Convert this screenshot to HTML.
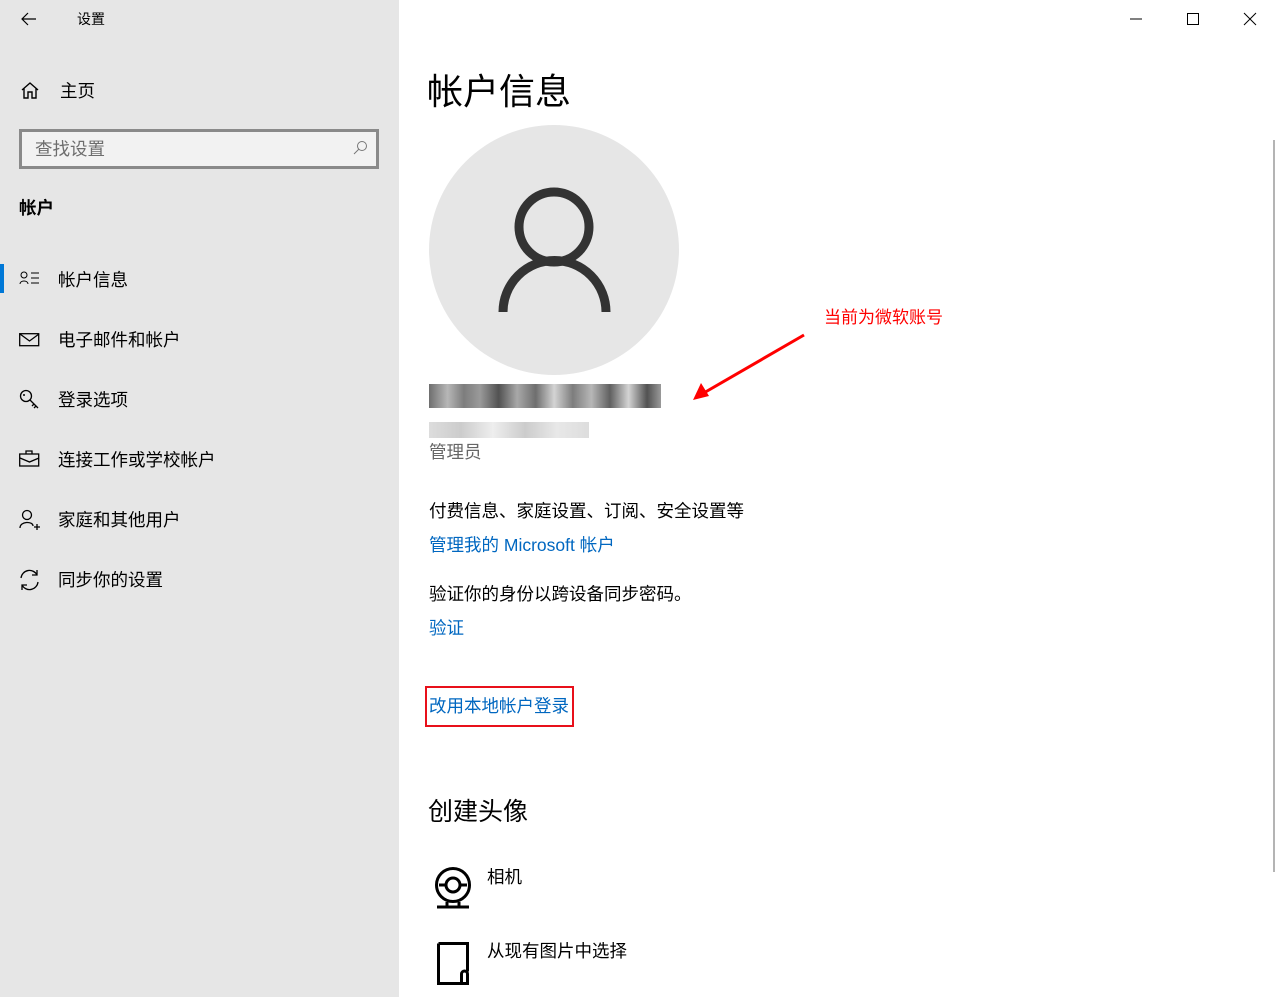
<!DOCTYPE html>
<html><head><meta charset="utf-8"><style>
body{margin:0;width:1277px;height:997px;position:relative;overflow:hidden;background:#fff;font-family:"Liberation Sans","Microsoft YaHei","Noto Sans CJK SC",sans-serif;color:#000}
.side{position:absolute;left:0;top:0;width:399px;height:997px;background:#e6e6e6}
.a{position:absolute;white-space:nowrap}
.nav{position:absolute;left:58px;font-size:17.5px}
.ic{position:absolute;left:19px}
.link{color:#0067c0}
</style></head><body>
<div class="side">
<svg class="a" style="left:20px;top:11px" width="18" height="16" viewBox="0 0 18 16"><path d="M16 8H2M8 2L2 8l6 6" stroke="#000" stroke-width="1.2" fill="none"/></svg>
<div class="a" style="left:77px;top:9px;font-size:14px">设置</div>
<svg class="a" style="left:20px;top:81px" width="20" height="19" viewBox="0 0 20 19"><path d="M2 9L10 2l8 7M4 7v10h4v-6h4v6h4V7" stroke="#000" stroke-width="1.4" fill="none"/></svg>
<div class="a" style="left:60px;top:78px;font-size:17.5px">主页</div>
<div class="a" style="left:19px;top:129px;width:354px;height:34px;border:3px solid #8a8a8a;background:#f2f2f2"></div>
<div class="a" style="left:35px;top:136px;font-size:17.5px;color:#6d6d6d">查找设置</div>
<svg class="a" style="left:352px;top:140px" width="16" height="16" viewBox="0 0 16 16"><circle cx="10" cy="6" r="4.5" stroke="#777" fill="none"/><path d="M7 9L2 14" stroke="#777"/></svg>
<div class="a" style="left:19px;top:195px;font-size:17.5px;font-weight:bold">帐户</div>
<div class="a" style="left:0;top:264px;width:4px;height:29px;background:#0078d7"></div>
<svg class="ic a" style="top:270px" width="22" height="16" viewBox="0 0 22 16"><circle cx="5" cy="5" r="3" stroke="#000" fill="none"/><path d="M1 14c0-4 8-4 8 0M12 3h8M12 8h8M12 13h8" stroke="#000" fill="none"/></svg>
<div class="nav" style="top:267px">帐户信息</div>
<svg class="ic a" style="top:333px" width="21" height="14" viewBox="0 0 21 14"><rect x=".7" y=".7" width="19" height="12" stroke="#000" stroke-width="1.3" fill="none"/><path d="M1 1l9.5 7L20 1" stroke="#000" stroke-width="1.3" fill="none"/></svg>
<div class="nav" style="top:327px">电子邮件和帐户</div>
<svg class="ic a" style="top:389px" width="21" height="22" viewBox="0 0 21 22"><circle cx="7" cy="7" r="5.5" stroke="#000" stroke-width="1.3" fill="none"/><circle cx="5" cy="6" r="1" fill="#000"/><path d="M11 11l8 8M15 15l-2 2M17 17l-2 2" stroke="#000" stroke-width="1.3"/></svg>
<div class="nav" style="top:387px">登录选项</div>
<svg class="ic a" style="top:450px" width="21" height="17" viewBox="0 0 21 17"><rect x=".7" y="4" width="19" height="12" stroke="#000" stroke-width="1.3" fill="none"/><path d="M7 4V1h6v3M1 8l9.5 4L20 8" stroke="#000" stroke-width="1.3" fill="none"/></svg>
<div class="nav" style="top:447px">连接工作或学校帐户</div>
<svg class="ic a" style="top:509px" width="22" height="22" viewBox="0 0 22 22"><circle cx="8" cy="6" r="4.5" stroke="#000" stroke-width="1.3" fill="none"/><path d="M1 19c0-7 13-7 13-2M15 18h6M18 15v6" stroke="#000" stroke-width="1.3" fill="none"/></svg>
<div class="nav" style="top:507px">家庭和其他用户</div>
<svg class="ic a" style="top:569px" width="21" height="22" viewBox="0 0 21 22"><path d="M2 9A8.5 8.5 0 0 1 18 6M19 13A8.5 8.5 0 0 1 3 16M18 1v5h-5M3 21v-5h5" stroke="#000" stroke-width="1.3" fill="none"/></svg>
<div class="nav" style="top:567px">同步你的设置</div>
</div>
<svg class="a" style="left:1128px;top:12px" width="132" height="14" viewBox="0 0 132 14"><path d="M2 7h12" stroke="#000"/><rect x="59.5" y="1.5" width="11" height="11" stroke="#000" fill="none"/><path d="M116 1l12 12M128 1l-12 12" stroke="#000"/></svg>
<div class="a" style="left:1273px;top:140px;width:2px;height:732px;background:#b4b4b4"></div>
<div class="a" style="left:427px;top:63px;font-size:36px">帐户信息</div>
<div class="a" style="left:429px;top:125px;width:250px;height:250px;border-radius:50%;background:#e6e6e6"></div>
<svg class="a" style="left:497px;top:185px" width="115" height="130" viewBox="0 0 115 130"><circle cx="57" cy="42" r="35" stroke="#333" stroke-width="9" fill="none"/><path d="M6 127a51 51 0 0 1 103 0" stroke="#333" stroke-width="9" fill="none"/></svg>
<div class="a" style="left:429px;top:384px;width:232px;height:24px;background:linear-gradient(90deg,#555,#aaa 8%,#666 15%,#888 22%,#333 30%,#999 38%,#555 46%,#ccc 54%,#666 62%,#aaa 70%,#444 78%,#ccc 86%,#333 94%,#888);opacity:.85"></div>
<div class="a" style="left:429px;top:422px;width:160px;height:16px;background:linear-gradient(90deg,#ddd,#ccc 20%,#eee 40%,#ccc 60%,#e8e8e8 80%,#ddd);"></div>
<div class="a" style="left:429px;top:439px;font-size:17.5px;color:#666">管理员</div>
<div class="a" style="left:429px;top:498px;font-size:17.5px">付费信息、家庭设置、订阅、安全设置等</div>
<div class="a link" style="left:429px;top:532px;font-size:17.5px">管理我的 Microsoft 帐户</div>
<div class="a" style="left:429px;top:581px;font-size:17.5px">验证你的身份以跨设备同步密码。</div>
<div class="a link" style="left:429px;top:615px;font-size:17.5px">验证</div>
<div class="a" style="left:425px;top:686px;width:145px;height:37px;border:2px solid #e8101a"></div>
<div class="a link" style="left:429px;top:693px;font-size:17.5px">改用本地帐户登录</div>
<div class="a" style="left:824px;top:303px;font-size:17px;color:#f00">当前为微软账号</div>
<svg class="a" style="left:690px;top:330px" width="120" height="75" viewBox="0 0 120 75"><path d="M114 5L12 64" stroke="#f00" stroke-width="3"/><path d="M3 70l8-17 8 13z" fill="#f00"/></svg>
<div class="a" style="left:428px;top:792px;font-size:25px">创建头像</div>
<svg class="a" style="left:433px;top:865px" width="40" height="45" viewBox="0 0 40 45"><circle cx="20" cy="20" r="16.5" stroke="#000" stroke-width="3" fill="none"/><circle cx="20" cy="20" r="7" stroke="#000" stroke-width="3" fill="none"/><path d="M6 20h7M27 20h7M14 37v4M26 37v4M4 42h32" stroke="#000" stroke-width="3" fill="none"/></svg>
<div class="a" style="left:487px;top:864px;font-size:17.5px">相机</div>
<svg class="a" style="left:437px;top:942px" width="36" height="44" viewBox="0 0 36 44"><path d="M1.5 1.5h29v28M1.5 1.5v40h23M24.5 41.5V32a3 3 0 0 1 6 0v9.5h-6" stroke="#000" stroke-width="3" fill="none"/></svg>
<div class="a" style="left:487px;top:938px;font-size:17.5px">从现有图片中选择</div>
</body></html>
